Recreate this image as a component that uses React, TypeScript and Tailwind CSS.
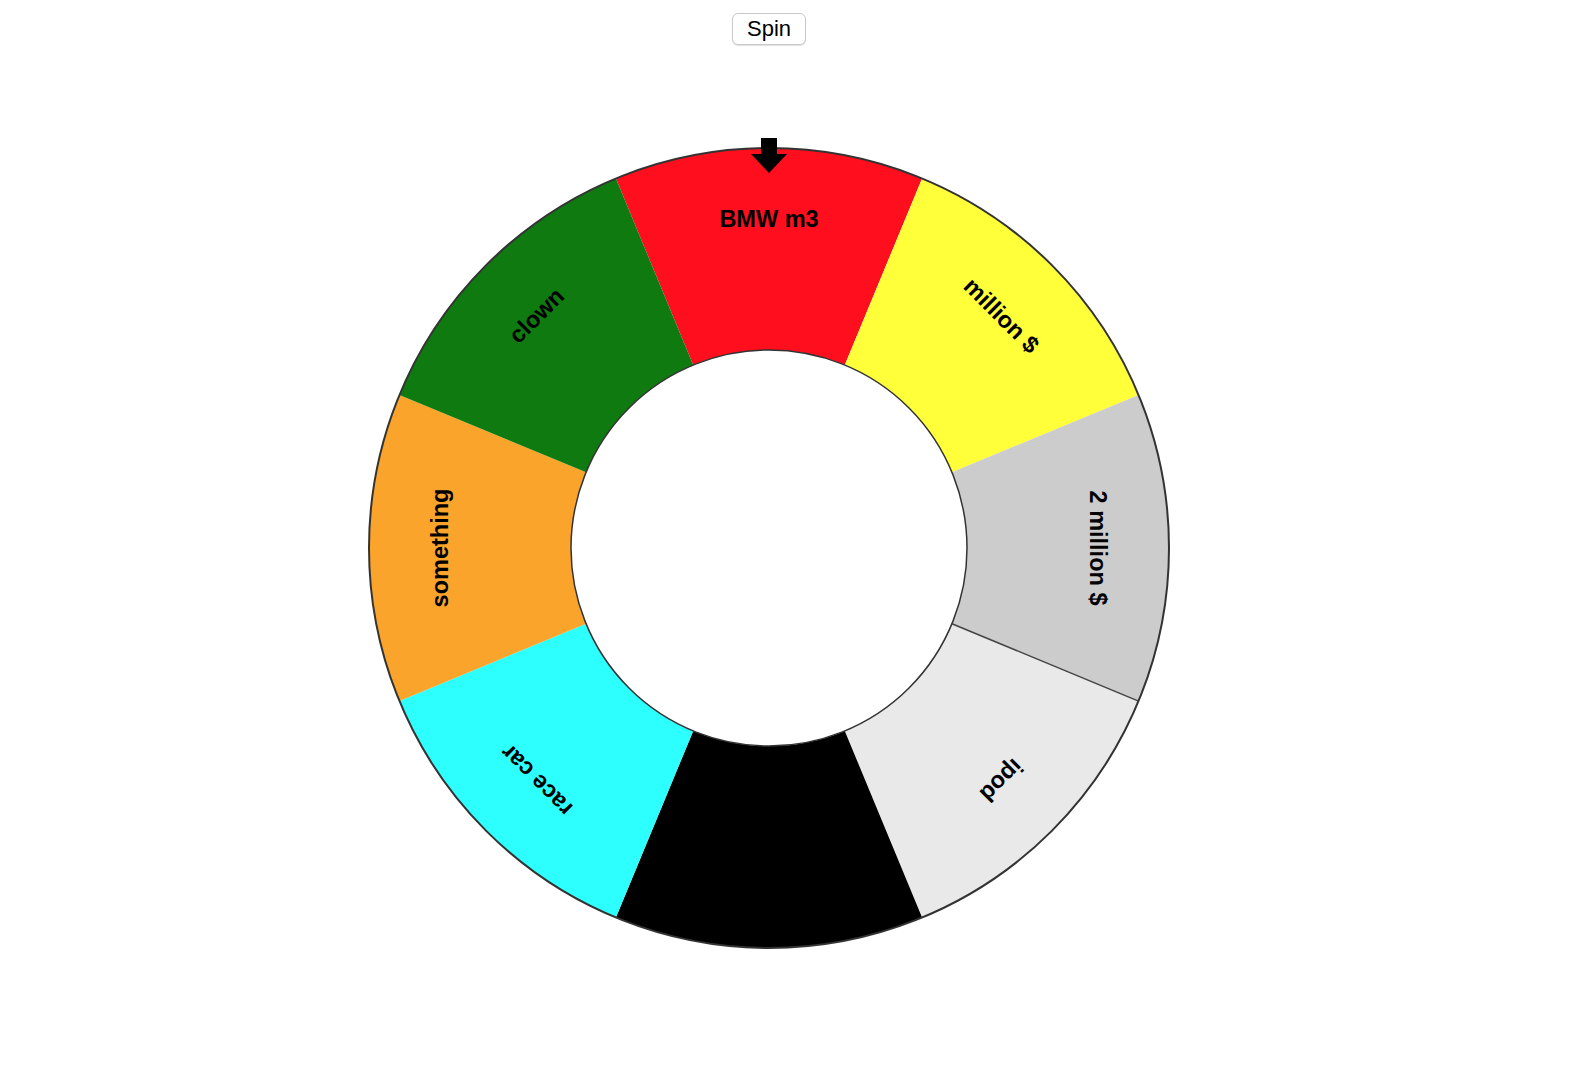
const CX = 410;
const CY = 410;
const R_OUT = 400;
const R_IN = 198;

const segments = [
  { label: "BMW m3", color: "#FF0F1E" },
  { label: "million $", color: "#FFFF3A" },
  { label: "2 million $", color: "#CCCCCC" },
  { label: "ipod", color: "#E9E9E9" },
  { label: "", color: "#000000" },
  { label: "race car", color: "#2DFFFF" },
  { label: "something", color: "#FBA42B" },
  { label: "clown", color: "#0F7A10" },
];

const pt = (r: number, deg: number) => {
  const a = ((deg - 90) * Math.PI) / 180;
  return [CX + r * Math.cos(a), CY + r * Math.sin(a)];
};

const slicePath = (start: number, end: number) => {
  const [x1, y1] = pt(R_OUT, start);
  const [x2, y2] = pt(R_OUT, end);
  const [x3, y3] = pt(R_IN, end);
  const [x4, y4] = pt(R_IN, start);
  return `M${x1} ${y1} A${R_OUT} ${R_OUT} 0 0 1 ${x2} ${y2} L${x3} ${y3} A${R_IN} ${R_IN} 0 0 0 ${x4} ${y4} Z`;
};

const Wheel = () => {
  const step = 360 / segments.length;
  return (
    <svg width="820" height="820" viewBox="0 0 820 820" className="block">
      {segments.map((s, i) => (
        <path
          key={i}
          d={slicePath(i * step - step / 2, i * step + step / 2)}
          fill={s.color}
        />
      ))}
      {/* one visible seam between the grey slices */}
      <line
        x1={pt(R_IN, 112.5)[0]}
        y1={pt(R_IN, 112.5)[1]}
        x2={pt(R_OUT, 112.5)[0]}
        y2={pt(R_OUT, 112.5)[1]}
        stroke="#444"
        strokeWidth="1.5"
      />
      <circle cx={CX} cy={CY} r={R_OUT} fill="none" stroke="#333" strokeWidth="2" />
      <circle cx={CX} cy={CY} r={R_IN} fill="#fff" stroke="#333" strokeWidth="1.5" />
      {segments.map((s, i) => (
        <text
          key={i}
          x={CX}
          y={CY - 327}
          transform={`rotate(${i * step} ${CX} ${CY})`}
          textAnchor="middle"
          dominantBaseline="middle"
          fontFamily="'Liberation Sans', Arial, sans-serif"
          fontWeight="bold"
          fontSize="23.5"
          fill="#000"
        >
          {s.label}
        </text>
      ))}
      {/* pointer */}
      <rect x={CX - 8} y={0} width="16" height="17" fill="#000" />
      <polygon points={`${CX - 18},16 ${CX + 18},16 ${CX},35`} fill="#000" />
    </svg>
  );
};

export default function App() {
  return (
    <div className="w-[1538px] bg-white min-h-[1092px] flex flex-col items-center pt-[13px] font-['Liberation_Sans',Arial,sans-serif]">
      <button className="h-[32px] px-[14px] rounded-[6px] border border-[#c9c9c9] bg-white shadow-[0_1px_1px_rgba(0,0,0,0.12)] text-[22px] leading-none text-black">
        Spin
      </button>
      <div className="mt-[93px]">
        <Wheel />
      </div>
    </div>
  );
}
